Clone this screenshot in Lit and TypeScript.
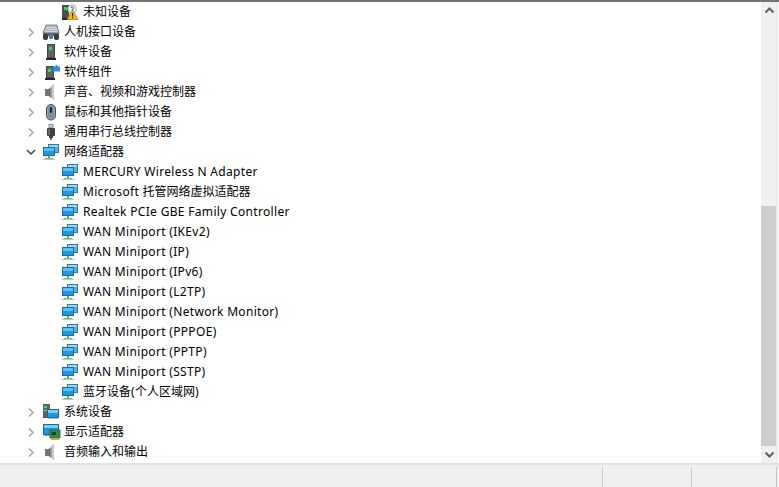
import { LitElement, html, css, svg } from 'lit';
import { customElement } from 'lit/decorators.js';

const speaker = svg`
  <rect x="2" y="5" width="4" height="7" fill="#70767a"/>
  <path d="M6 5 11 0v16L6 12z" fill="#a3a8aa"/>
  <path d="M9 2 11 0v16l-2-2z" fill="#c6c9ca"/>
  <path d="M6 5 7.500 3.500v10L6 12z" fill="#62676a"/>`;

const tower = svg`
  <rect x="4" y="0" width="8" height="14" fill="#43484b"/>
  <rect x="5" y="1" width="6" height="12" fill="#5f6467"/>
  <rect x="6" y="3" width="3" height="3" fill="#3fe04f"/>
  <rect x="3" y="14" width="10" height="2" fill="#25282a"/>`;

const monitorPair = svg`
  <rect x="5.500" y="0.500" width="10" height="8" fill="#4fb4e8" stroke="#2f779f"/>
  <rect x="6" y="1" width="9" height="2" fill="#9adcf8"/>
  <rect x="0.500" y="3.500" width="11" height="8" fill="#1f97e4" stroke="#23688f"/>
  <rect x="1" y="4" width="10" height="3" fill="#5cc0f2"/>
  <rect x="5" y="12" width="2" height="2" fill="#4fb254"/>
  <rect x="2" y="14" width="8" height="1" fill="#6cc96f"/>
  <rect x="0" y="15" width="12" height="1" fill="#b9c4bd"/>`;

const icons: Record<string, unknown> = {
  unknown: svg`
    <rect x="0" y="1" width="7" height="13" fill="#4a4f52"/>
    <rect x="2" y="3" width="3" height="3" fill="#3fe04f"/>
    <rect x="0" y="14" width="8" height="2" fill="#25282a"/>
    <circle cx="10" cy="5" r="4.200" fill="#f4f6f7" stroke="#9aa6ad"/>
    <path d="M8.600 3.600c.8-1 2.800-.8 2.800.6 0 1-1.300 1-1.300 2.300" fill="none" stroke="#5f7f94" stroke-width="1.200"/>
    <path d="M10.500 6 16 15.500H5z" fill="#f5b92b" stroke="#b57c14" stroke-width=".8"/>
    <rect x="10" y="9" width="1.200" height="3.500" fill="#30240c"/>
    <rect x="10" y="13" width="1.200" height="1.300" fill="#30240c"/>`,
  hid: svg`
    <path d="M3 1h11l2 8H0z" fill="#aeb9c2" stroke="#69747c" stroke-width=".8"/>
    <path d="M3.500 3.500h10M3 5.500h11M2.500 7.500h12" stroke="#eef2f5" stroke-dasharray="1 1"/>
    <rect x="0" y="9" width="16" height="3" fill="#59646c"/>
    <rect x="0" y="10" width="5" height="6" rx="2" fill="#343e45"/>
    <rect x="6" y="10" width="4" height="5" rx="1.500" fill="#4f7ea0"/>
    <rect x="11" y="10" width="5" height="6" rx="2" fill="#343e45"/>`,
  software: svg`${tower}`,
  component: svg`
    <g transform="translate(-1 2)">
      <rect x="4" y="0" width="8" height="12" fill="#43484b"/>
      <rect x="5" y="1" width="6" height="10" fill="#5f6467"/>
      <rect x="6" y="3" width="3" height="3" fill="#3fe04f"/>
      <rect x="3" y="12" width="10" height="2" fill="#25282a"/>
    </g>
    <path d="M10 2.500h2.500V1h2v1.500H17v5h-7z" fill="#2b8fe0"/>`,
  sound: speaker,
  mouse: svg`
    <rect x="3.500" y="0.500" width="9" height="15.500" rx="4.500" fill="#9dabb7" stroke="#3f474e"/>
    <rect x="5" y="2" width="6" height="12.500" rx="3" fill="#7f8c98"/>
    <rect x="7" y="3" width="2" height="6" rx="1" fill="#0f2a45"/>`,
  usb: svg`
    <rect x="6" y="0.500" width="4" height="3.500" fill="#d4d8da" stroke="#75797c" stroke-width=".8"/>
    <rect x="4" y="4" width="8" height="8" rx="1" fill="#3a3f42"/>
    <rect x="5" y="5" width="2" height="6" fill="#63686b"/>
    <rect x="6" y="12" width="4" height="2" fill="#3a3f42"/>
    <rect x="7" y="14" width="2" height="2" fill="#6c7174"/>`,
  net: monitorPair,
  system: svg`
    <rect x="0" y="0" width="7" height="14" fill="#5b6063"/>
    <rect x="1" y="2" width="3" height="2" fill="#3fe04f"/>
    <rect x="1" y="6" width="5" height="1" fill="#babfc2"/>
    <rect x="4.500" y="5.500" width="11" height="8" fill="#1f97e4" stroke="#23688f"/>
    <rect x="5" y="6" width="10" height="3" fill="#7cccf3"/>
    <rect x="5" y="14" width="10" height="1" fill="#b4bfc6"/>`,
  display: svg`
    <rect x="0.500" y="0.500" width="15" height="10" fill="#1f97e4" stroke="#23688f"/>
    <rect x="1" y="1" width="14" height="3" fill="#7cccf3"/>
    <rect x="1" y="11" width="6" height="1" fill="#9aa4aa"/>
    <rect x="7" y="6" width="10" height="8" fill="#2f8a52" stroke="#1f5f38" stroke-width=".8"/>
    <rect x="9" y="8" width="4" height="3" fill="#174029"/>
    <rect x="8" y="14" width="8" height="2" fill="#e0a52e"/>`,
};

type Row = { label: string; icon: string; level: 1 | 2; state?: 'closed' | 'open' };

const rows: Row[] = [
  { label: '未知设备', icon: 'unknown', level: 2 },
  { label: '人机接口设备', icon: 'hid', level: 1, state: 'closed' },
  { label: '软件设备', icon: 'software', level: 1, state: 'closed' },
  { label: '软件组件', icon: 'component', level: 1, state: 'closed' },
  { label: '声音、视频和游戏控制器', icon: 'sound', level: 1, state: 'closed' },
  { label: '鼠标和其他指针设备', icon: 'mouse', level: 1, state: 'closed' },
  { label: '通用串行总线控制器', icon: 'usb', level: 1, state: 'closed' },
  { label: '网络适配器', icon: 'net', level: 1, state: 'open' },
  { label: 'MERCURY Wireless N Adapter', icon: 'net', level: 2 },
  { label: 'Microsoft 托管网络虚拟适配器', icon: 'net', level: 2 },
  { label: 'Realtek PCIe GBE Family Controller', icon: 'net', level: 2 },
  { label: 'WAN Miniport (IKEv2)', icon: 'net', level: 2 },
  { label: 'WAN Miniport (IP)', icon: 'net', level: 2 },
  { label: 'WAN Miniport (IPv6)', icon: 'net', level: 2 },
  { label: 'WAN Miniport (L2TP)', icon: 'net', level: 2 },
  { label: 'WAN Miniport (Network Monitor)', icon: 'net', level: 2 },
  { label: 'WAN Miniport (PPPOE)', icon: 'net', level: 2 },
  { label: 'WAN Miniport (PPTP)', icon: 'net', level: 2 },
  { label: 'WAN Miniport (SSTP)', icon: 'net', level: 2 },
  { label: '蓝牙设备(个人区域网)', icon: 'net', level: 2 },
  { label: '系统设备', icon: 'system', level: 1, state: 'closed' },
  { label: '显示适配器', icon: 'display', level: 1, state: 'closed' },
  { label: '音频输入和输出', icon: 'sound', level: 1, state: 'closed' },
];

@customElement('app-root')
export class AppRoot extends LitElement {
  static styles = css`
    :host {
      display: flex;
      flex-direction: column;
      width: 779px;
      height: 487px;
      overflow: hidden;
      background: #fff;
      font-family: 'Noto Sans', 'Noto Sans CJK SC', sans-serif;
      font-size: 12px;
      color: #000;
    }

    .main {
      flex: 1;
      min-height: 0;
      display: flex;
      border-top: 2px solid #727272;
    }

    .tree {
      flex: 1;
      min-width: 0;
      overflow: hidden;
    }

    .row {
      display: flex;
      align-items: center;
      height: 18px;
      padding-bottom: 2px;
      white-space: nowrap;
    }

    .lv1 {
      padding-left: 25px;
    }

    .lv2 {
      padding-left: 62px;
    }

    .label {
      white-space: pre;
    }

    .latin {
      letter-spacing: 0.32px;
    }

    .chevron {
      width: 12px;
      height: 12px;
      margin-right: 6px;
      fill: none;
      stroke: #a6a6a6;
      stroke-width: 1.5;
    }

    .chevron.open {
      stroke: #404040;
    }

    .icon {
      width: 16px;
      height: 16px;
      margin-top: 2px;
      margin-right: 5px;
      flex: none;
      overflow: visible;
    }

    .scrollbar {
      width: 16px;
      margin-right: 1px;
      display: flex;
      flex-direction: column;
      background: #f0f0f0;
      border-right: 1px solid #e6e6e6;
    }

    .arrow {
      height: 17px;
      display: flex;
      align-items: center;
      justify-content: center;
    }

    .arrow svg {
      width: 9px;
      height: 7px;
      fill: none;
      stroke: #606060;
      stroke-width: 2;
    }

    .track {
      flex: 1;
      padding-top: 187px;
      display: flex;
    }

    .thumb {
      flex: 1;
      margin-right: 1px;
      background: #cdcdcd;
    }

    .status {
      flex: none;
      height: 20px;
      padding-top: 2px;
      display: flex;
      justify-content: flex-end;
      background: #f0f0f0;
      border-top: 2px solid #e2e2e2;
    }

    .pane {
      border-left: 1px solid #c9c9c9;
    }

    .pane.wide {
      width: 88px;
    }

    .pane.right {
      width: 84px;
      margin-right: 2px;
      border-right: 1px solid #c9c9c9;
    }
  `;

  // latin runs get a little tracking, the CJK glyphs already have the right width
  renderLabel(label: string) {
    return label
      .split(/([\x20-\x7e]+)/)
      .filter((part) => part)
      .map((part) =>
        /[\x20-\x7e]/.test(part) ? html`<span class="latin">${part}</span>` : html`<span>${part}</span>`,
      );
  }

  renderRow(r: Row) {
    return html`
      <div class="row ${r.level === 1 ? 'lv1' : 'lv2'}">
        ${r.state
          ? html`<svg class="chevron ${r.state}" viewBox="0 0 12 12">
              <path d=${r.state === 'open' ? 'M2 5l4 4 4-4' : 'M4 3.500l4 4-4 4'}></path>
            </svg>`
          : ''}
        <svg class="icon" viewBox="0 0 16 16">${icons[r.icon]}</svg>
        <span class="label">${this.renderLabel(r.label)}</span>
      </div>
    `;
  }

  render() {
    return html`
      <div class="main">
        <div class="tree">${rows.map((r) => this.renderRow(r))}</div>
        <div class="scrollbar">
          <div class="arrow"><svg viewBox="0 0 9 7"><path d="M.5 5.500 4.500 1.500l4 4"></path></svg></div>
          <div class="track"><div class="thumb"></div></div>
          <div class="arrow"><svg viewBox="0 0 9 7"><path d="M.5 1.500 4.500 5.500l4-4"></path></svg></div>
        </div>
      </div>
      <div class="status">
        <div class="pane wide"></div>
        <div class="pane right"></div>
      </div>
    `;
  }
}

declare global {
  interface HTMLElementTagNameMap {
    'app-root': AppRoot;
  }
}
